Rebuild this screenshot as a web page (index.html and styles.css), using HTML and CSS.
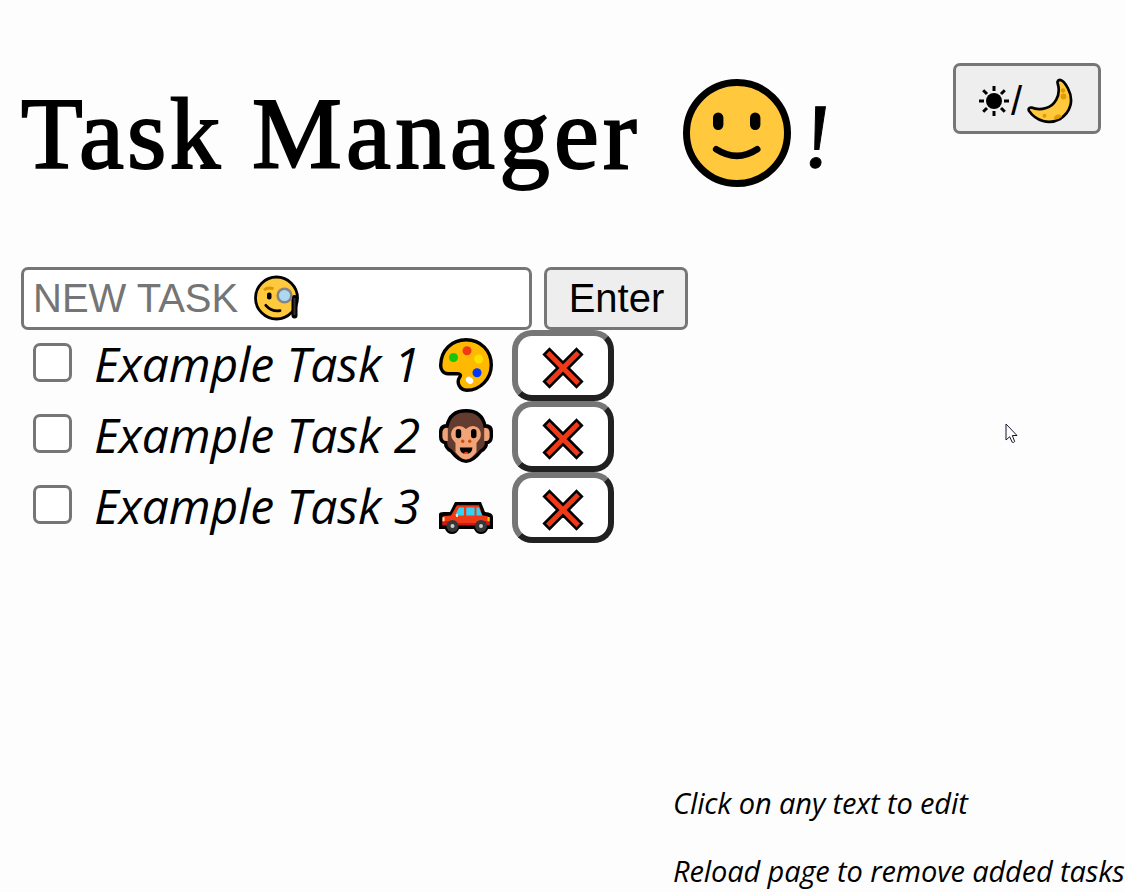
FILE: index.html
```html
<!DOCTYPE html>
<html lang="en">
<head>
<meta charset="utf-8">
<title>Task Manager</title>
<link rel="stylesheet" href="styles.css">
</head>
<body>
<svg width="0" height="0" class="defs"><defs>
<symbol id="cross" viewBox="0 0 42 42"><path d="M7.500 2.200 21 15.700 34.500 2.200 39.800 7.500 26.300 21 39.800 34.500 34.500 39.800 21 26.300 7.500 39.800 2.200 34.500 15.700 21 2.200 7.500Z" fill="#f03a17" stroke="#000" stroke-width="2.600"/></symbol>
</defs></svg>
<div class="page">
<header class="header">
<h1 class="title"><span class="word-task">Task</span><span class="word-manager">Manager</span>
<svg class="smiley" viewBox="0 0 108 108"><circle cx="54" cy="54" r="50.500" fill="#ffc83d" stroke="#000" stroke-width="7"/><rect x="30" y="33.500" width="10.400" height="17.500" rx="5.200"/><rect x="67" y="33.500" width="10.400" height="17.500" rx="5.200"/><path d="M33.200 70.300Q54 83.500 74.200 70.300" fill="none" stroke="#000" stroke-width="6.600" stroke-linecap="round"/></svg><span class="bang">!</span></h1>
<button class="theme">
<svg class="sun" viewBox="0 0 32 32"><circle cx="16" cy="16" r="8"/><path d="M16 1v5M16 26v5M1 16h5M26 16h5M5.200 5.200l3.800 3.800M23 23l3.800 3.800M5.200 26.800 9 23M23 9l3.800-3.800" stroke="#000" stroke-width="3"/></svg><span class="slash">/</span><svg class="moon" viewBox="0 0 46 46"><path d="M32.700 1.800C30.500 2 30 4 31 6.700C34 18 27 28 19 30C13 32 9 31.500 4.500 29.600C2 29 1 31.300 2.100 33C9 43 22 47 33 41C44 34 47 22 41 10.500C39 6.500 36 2 32.700 1.800Z" fill="#ffc83d" stroke="#000" stroke-width="2.700"/><g fill="#e19d00"><circle cx="36" cy="12.500" r="2.200"/><circle cx="36.500" cy="18.500" r="2.900"/><circle cx="17.500" cy="37.800" r="2"/><path d="M26.500 42q.5-6.300 6.300-5.500l2.300 2.200q-4 3.400-8.600 3.300z"/></g></svg>
</button>
</header>
<main>
<form class="entry">
<div class="field"><span>NEW TASK</span>
<svg class="monocle" viewBox="0 0 46 46"><circle cx="22.500" cy="23" r="21" fill="#ffc83d" stroke="#000" stroke-width="2.800"/><path d="M10 15q4-3.300 9.500-1.200" fill="none" stroke="#d79600" stroke-width="2.800"/><rect x="13" y="17.500" width="4.500" height="7" rx="2"/><path d="M11.800 30.300q5.500 6.500 14.200 5.400" fill="none" stroke="#000" stroke-width="2.800" stroke-linecap="round"/><path d="M40.500 23v17.500" stroke="#000" stroke-width="6" stroke-linecap="round"/><path d="M40.500 23v17" stroke="#333" stroke-width="2"/><circle cx="30.500" cy="20.500" r="6.800" fill="#add8f2" stroke="#858585" stroke-width="2.600"/></svg></div>
<button class="enter" type="button">Enter</button>
</form>
<ul class="tasks">
<li class="task"><span class="check"></span><span class="label">Example Task 1</span>
<svg class="emoji" viewBox="0 0 54 54"><path d="M1.700 27C2 12 13 1.700 27 1.700C42 1.700 52.300 13 52.300 27C52.300 41 41 52.300 28 52.300C20 52 17.500 44 20.500 39.500C22.500 37 21 35.700 18.500 35.700H9C4 35.700 1.500 31.500 1.700 27Z" fill="#ffb900" stroke="#000" stroke-width="3.400"/><circle cx="14.500" cy="19.500" r="4.500" fill="#16c60c"/><circle cx="28" cy="12.700" r="4.500" fill="#f03a17"/><circle cx="39.700" cy="21" r="4.500" fill="#ffe000"/><circle cx="38" cy="34.700" r="4.500" fill="#0037ff"/><ellipse cx="30.500" cy="42.300" rx="4" ry="3.100" transform="rotate(38 30.500 42.300)" fill="#fff"/></svg>
<button class="remove"><svg viewBox="0 0 42 42"><use href="#cross"/></svg></button></li>
<li class="task"><span class="check"></span><span class="label">Example Task 2</span>
<svg class="emoji" viewBox="0 0 54 54"><path d="M8 17Q11 1.700 27 1.700T46 17H48.500Q52.300 18 52.300 22V28Q52 33.700 47.500 33.700Q47.500 39 42 42Q34 52.300 27 52.300T12 42Q6.500 39 6.500 33.700Q1.700 33 1.700 28V22Q2 18 5.500 17Z" fill="#643b2f" stroke="#000" stroke-width="3.400"/><path d="M8.800 19H6.700Q3.500 20 3.500 24v4Q4 32 7 32h1.800zM45.200 19h2.100Q50.500 20 50.500 24v4Q50 32 47 32h-1.800z" fill="#f1a477"/><path d="M27 20Q22 15.500 17 17.700C11 20 11 28 14.500 31.500L16.500 34V43Q22 50.500 27 50.500T37.500 43V34L39.500 31.500C43 28 43 20 37 17.700Q32 15.500 27 20Z" fill="#f1a477"/><rect x="16.700" y="20" width="5.500" height="9.200" rx="2.700"/><rect x="32" y="20" width="5.500" height="9.200" rx="2.700"/><circle cx="23.700" cy="32.200" r="1.700" fill="#c84b10"/><circle cx="30.700" cy="32.200" r="1.700" fill="#c84b10"/><path d="M20.800 38.600h12.600q0 6.400-6.300 6.400t-6.300-6.400z"/><path d="M24.300 44.400q2.800-3.400 5.600 0-2.800 1.300-5.600 0z" fill="#ff3b12"/></svg>
<button class="remove"><svg viewBox="0 0 42 42"><use href="#cross"/></svg></button></li>
<li class="task"><span class="check"></span><span class="label">Example Task 3</span>
<svg class="emoji" viewBox="0 0 54 54"><g transform="translate(0 22)"><path d="M0 27V12Q0 10 5 10L11 10 16 0H42L46 10Q54 10.500 54 15V27H49Q47 32 42 32T35 27H20Q18 32 13 32T6 27Z"/><path d="M3.500 23V15Q4 13.500 12 13.500L18 3.200H40L43.500 13.500Q50.500 13.500 50.500 17V23Z" fill="#f03a17"/><path d="M3.500 19h47v4.500h-47z" fill="#cf1717"/><path d="M12 13.500h32v7.500H12z" fill="#f03a17"/><path d="M16 13.500 20 5.500H25V13.500ZM27.300 5.500H35.500V13.500H27.300ZM37.500 5.500H40L43 13.500H37.500Z" fill="#30d5f5"/><path d="M3.500 15.300h2v4h-2z" fill="#fff3ad"/><path d="M48.500 15h2.200v4.300h-2.200z" fill="#ffb900"/><path d="M17 12h2v3h-2z" fill="#ddd"/><circle cx="13.500" cy="24" r="6" fill="#373737"/><circle cx="42" cy="24" r="6" fill="#373737"/><circle cx="13.500" cy="24" r="2" fill="#ccc"/><circle cx="42" cy="24" r="2" fill="#ccc"/></g></svg>
<button class="remove"><svg viewBox="0 0 42 42"><use href="#cross"/></svg></button></li>
</ul>
</main>
<footer class="hints"><p class="hint-edit">Click on any text to edit</p><p class="hint-reload">Reload page to remove added tasks</p></footer>
<svg class="cursor" viewBox="0 0 13 21"><path d="M1 1V17L4.700 13.700 7.200 19.200Q8.500 20 9.700 18.500L7.300 12.500H12Z" fill="#fff" stroke="#15152b" stroke-width="1"/></svg>
</div>
</body>
</html>
```
FILE: styles.css
```css
* { box-sizing: border-box; }
body { margin: 0; background: #fdfdfd; color: #000; overflow: hidden; }
button { padding: 0; margin: 0; font: 40px "Liberation Sans", sans-serif; color: #000; }
svg { display: block; flex: none; }
.defs { position: absolute; }
.page { position: relative; width: 1125px; height: 892px; display: flex; flex-direction: column; overflow: hidden; }
.header { height: 267px; flex: none; display: flex; justify-content: space-between; align-items: flex-start; padding: 63px 24px 0 21px; }
.title { margin: 0; height: 140px; display: flex; align-items: center; font: 400 101px/145px "Liberation Serif", serif; -webkit-text-stroke: 2px #000; white-space: nowrap; }
.word-task { width: 231px; padding-top: 2px; letter-spacing: 3.300px; }
.word-manager { width: 431px; padding-top: 2px; letter-spacing: 4.300px; }
.smiley { width: 108px; height: 108px; }
.bang { padding: 6px 0 0 12px; font-size: 92px; -webkit-text-stroke: 1px #000; transform: skewX(-5deg); }
.theme { width: 148px; height: 71px; border: 3px solid #767676; border-radius: 7px; background: #eee; display: flex; align-items: center; justify-content: flex-start; padding: 4px 0 0 22px; }
.sun { width: 32px; height: 32px; margin-right: 1px; }
.slash { padding-top: 1px; }
.moon { width: 46px; height: 46px; margin-left: 5px; }
.entry { display: flex; gap: 12px; padding-left: 21px; margin: 0; height: 63px; }
.field { width: 511px; border: 3px solid #767676; border-radius: 7px; background: #fff; color: #757575; font: 40px/57px "Liberation Sans", sans-serif; display: flex; align-items: center; padding-left: 9px; gap: 16px; }
.monocle { width: 46px; height: 46px; margin-bottom: 1px; }
.enter { width: 144px; border: 3px solid #767676; border-radius: 7px; background: #eee; padding-left: 1px; }
.tasks { list-style: none; margin: 0; padding: 0 0 0 33px; }
.task { display: flex; height: 71px; align-items: flex-start; }
.check { width: 39px; height: 39px; margin: 13px 22px 0 0; border: 3px solid #767676; border-radius: 7px; background: #fff; }
.label { width: 345px; font: italic 400 48px/68px "Open Sans", sans-serif; letter-spacing: -0.080px; white-space: nowrap; }
.emoji { width: 54px; height: 54px; margin: 8px 19px 0 0; }
.remove { width: 102px; height: 71px; border: 6px solid; border-color: #767676 #212121 #212121 #767676; border-radius: 20px; background: #fff; display: flex; align-items: center; justify-content: center; padding-top: 5px; }
.remove svg { width: 42px; height: 42px; }
.hints { margin-top: auto; padding: 0 0 1px 673px; font: italic 400 29px/40px "Open Sans", sans-serif; letter-spacing: -0.120px; white-space: nowrap; }
.hints p { margin: 0; }
.hint-edit { padding-bottom: 28px; }
.cursor { position: absolute; left: 1005px; top: 423px; width: 13px; height: 21px; }
```
